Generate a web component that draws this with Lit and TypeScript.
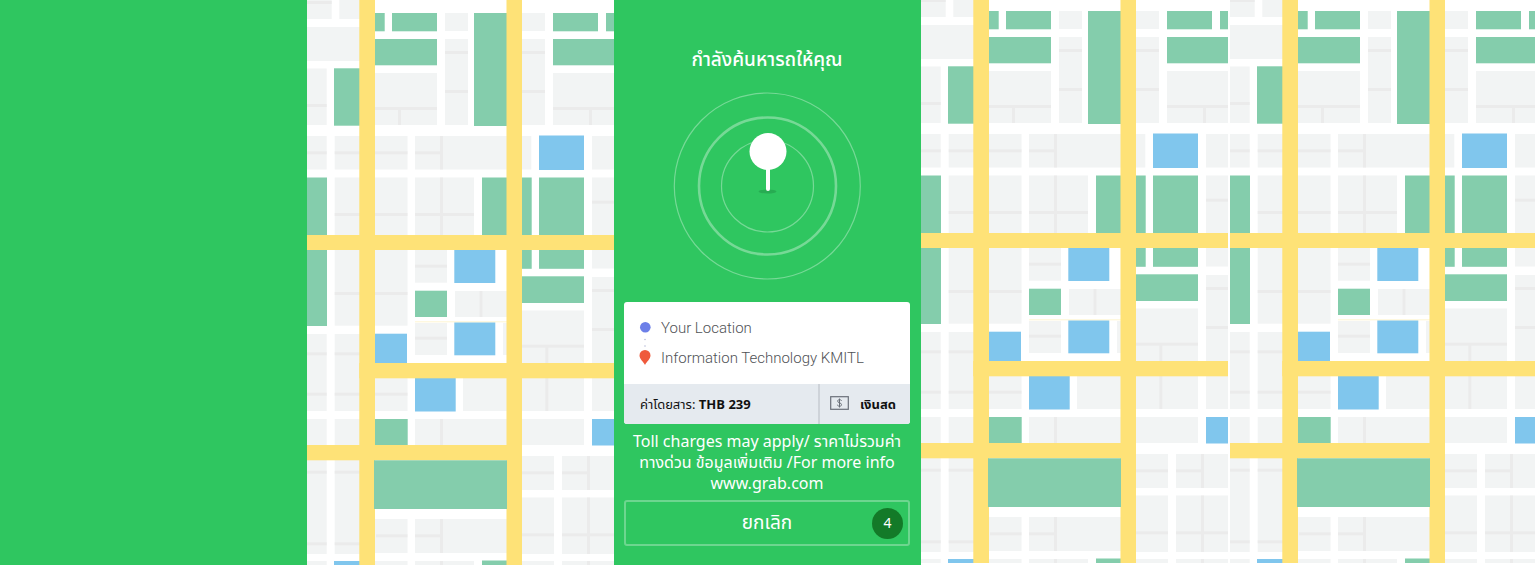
import { LitElement, html, svg, css } from "lit";
import { customElement, property } from "lit/decorators.js";

type Box = [number, number, number, number];

// Every box is left, top, right, bottom.
const blocks: Box[] = [
  [0, 0, 24.7, 19], [32.3, 0, 53, 19], [0, 27, 53, 61], [0, 68.5, 19.7, 125],
  [0, 136, 19.7, 169.5], [27.7, 136, 53, 169.5],
  [138, 13, 161, 31], [138, 39, 161, 125], [68, 73, 130, 125],
  [68, 136, 100.5, 169.5], [108, 136, 200, 169.5],
  [215, 13, 238, 31], [215, 39, 238, 125], [246, 73, 307, 125],
  [215, 136, 224.3, 169.5], [285, 136, 307, 169.5],
  [27.7, 177.5, 53, 325.7], [68, 177.5, 100.5, 325.7], [108, 177.5, 167, 236],
  [285, 177.5, 307, 268.5], [108, 250, 140, 282.7], [148, 291, 200, 317],
  [108, 323, 140, 355], [196, 323, 200, 355], [215, 310.5, 277, 364],
  [285, 277, 307, 364], [0, 334, 19.7, 411], [27.7, 334, 53, 411],
  [68, 378, 100.5, 411], [156, 378, 200, 411], [215, 378, 277, 411],
  [285, 378, 307, 411], [0, 419, 19.7, 446], [27.7, 419, 53, 446],
  [108, 419, 200, 446], [215, 419, 277, 445], [0, 460, 19.7, 554],
  [27.7, 460, 53, 554], [68, 519, 100.5, 553], [108, 519, 200, 553],
  [215, 456, 247, 490], [255, 456, 307, 490], [215, 497.5, 247, 554],
  [255, 497.5, 307, 554], [0, 561, 19.7, 580], [68, 561, 100.5, 580],
  [108, 561, 167, 580], [215, 561, 247, 580], [255, 561, 307, 580],
];

const lanes: Box[] = [
  [0, 1, 24.7, 4], [0, 104, 19.7, 107], [0, 151.3, 19.7, 154.3],
  [27.7, 151.3, 53, 154.3], [138, 51, 161, 54], [138, 90, 161, 93],
  [68, 107, 130, 110], [91, 109, 94, 125], [68, 151.3, 100.5, 154.3],
  [108, 151.3, 134, 154.3], [133, 136, 136, 169.5], [215, 51, 238, 54],
  [215, 90, 238, 93], [246, 107, 307, 110], [282, 109, 285, 125],
  [27.7, 213, 53, 216], [68, 213, 100.5, 216], [108, 213, 167, 216],
  [133, 177.5, 136, 236], [27.7, 292, 53, 295], [68, 292, 100.5, 295],
  [285, 200.7, 307, 203.7], [108, 264.7, 140, 267.7], [172.5, 291, 175.5, 317],
  [108, 336.7, 140, 339.7], [215, 344.7, 277, 347.7], [238.3, 346, 241.3, 411],
  [285, 289, 307, 292], [285, 328, 307, 331], [0, 352.3, 19.7, 355.3],
  [27.7, 352.3, 53, 355.3], [0, 392.7, 19.7, 395.7], [27.7, 392.7, 53, 395.7],
  [68, 392.7, 100.5, 395.7], [133, 419, 136, 446], [0, 470.7, 19.7, 473.7],
  [27.7, 470.7, 53, 473.7], [0, 542.3, 19.7, 545.3], [27.7, 542.3, 53, 545.3],
  [69, 534.3, 100.5, 537.3], [108, 534.3, 134, 537.3], [133, 519, 136, 553],
  [215, 471.3, 247, 474.3], [255, 471.3, 281, 474.3], [280, 456, 283, 490],
  [215, 533.3, 247, 536.3], [255, 533.3, 307, 536.3], [280, 497.5, 283, 554],
  [133, 561, 136, 580], [280, 561, 283, 580],
];

const parks: Box[] = [
  [27, 68.3, 53, 125.7], [68, 13, 77.7, 31.3], [85, 13, 130, 31.3],
  [167, 13, 200, 126], [68, 39, 130, 65.3], [246, 13, 291, 31.3],
  [299, 13, 307, 31.3], [246, 39, 307, 65.3], [0, 177.5, 20, 326],
  [175, 177.5, 200, 236], [215, 177.5, 224.7, 268.8], [232, 177.5, 277, 268.8],
  [108, 290.7, 140, 317], [215, 276.3, 277, 303], [68, 419, 100.7, 446],
  [175, 560.5, 200, 580],
];

const water: Box[] = [
  [232, 135.5, 277, 170], [147.3, 249, 188.3, 283], [147.3, 322.3, 188.3, 355.3],
  [68, 333.7, 100, 364], [108, 378, 148.7, 411.5], [285, 419, 307, 445.5],
  [27, 561, 53, 580],
];

const roads: Box[] = [
  [52.3, 0, 68, 580], [199.5, 0, 215, 580], [0, 235, 307, 250],
  [52.3, 363, 307, 378.3], [0, 445, 215, 460.3],
];

const draw = (boxes: Box[], name: string) =>
  boxes.map(([l, t, r, b]) => svg`<rect class=${name} x=${l} y=${t} width=${r - l} height=${b - t}></rect>`);

@customElement("city-map")
export class CityMap extends LitElement {
  @property({ type: Number }) top = 0;

  static styles = css`
    :host { display: block; position: relative; overflow: hidden; background: #fff; }
    svg { position: absolute; inset: 0; width: 100%; height: 100%; }
    .block { fill: #f2f4f4; }
    .lane { fill: #ebebeb; }
    .park { fill: #84cdac; }
    .water { fill: #80c6ed; }
    .road { fill: #fee277; }
    .trace { fill: #fef5d2; }
  `;

  render() {
    return html`
      <svg viewBox="0 ${this.top} 310 ${565 - this.top}" preserveAspectRatio="xMinYMin slice" aria-hidden="true">
        ${draw(blocks, "block")} ${draw(lanes, "lane")} ${draw(parks, "park")} ${draw(water, "water")}
        <rect class="trace" x="108" y="321.3" width="92" height="1"></rect>
        ${draw(roads, "road")}
        <rect class="park" x="67" y="460.3" width="133" height="48.7"></rect>
      </svg>
    `;
  }
}

@customElement("search-screen")
export class SearchScreen extends LitElement {
  static styles = css`
    :host {
      display: flex;
      flex-direction: column;
      box-sizing: border-box;
      padding: 46px 11px 19px 10px;
      background: #2fc660;
      color: #fff;
    }
    h1 { margin: 0; font-size: 19px; line-height: 30px; font-weight: 500; text-align: center; }
    .radar { display: block; width: 188px; height: 188px; margin: 16px auto 22px; }
    .ring { fill: none; stroke: #fff; stroke-opacity: 0.34; }
    .card { border-radius: 3px; overflow: hidden; background: #fff; color: #505256; }
    .places { list-style: none; margin: 0; padding: 11px 15px; font-family: Roboto, "Noto Sans", sans-serif; }
    .place { display: flex; align-items: center; gap: 10px; height: 30px; font-size: 15px; font-weight: 300; }
    .place svg { flex: none; width: 12px; height: 30px; }
    .fare { display: grid; grid-template-columns: 2fr 92px; height: 40px; background: #e5eaef; color: #111; font-size: 13px; line-height: 42px; }
    .price { padding-left: 16px; }
    .method { display: flex; align-items: center; justify-content: space-between; padding: 0 14px 0 10px; border-left: 2px solid #ced3d9; }
    .method svg { width: 19px; height: 14px; margin-bottom: 4px; }
    .note { margin: 8px 0 5px; font-size: 16px; line-height: 21px; text-align: center; }
    .cancel {
      display: grid;
      grid-template-columns: 1fr auto 1fr;
      align-items: center;
      height: 46px;
      padding: 0 5px;
      border: 2px solid #6dd68f;
      border-radius: 3px;
      background: none;
      color: #fff;
      font: inherit;
      font-size: 19px;
    }
    .label { grid-column: 2; }
    .count { justify-self: end; width: 31px; height: 31px; border-radius: 50%; background: #137a28; font-size: 14px; line-height: 31px; }
  `;

  render() {
    return html`
      <h1>กำลังค้นหารถให้คุณ</h1>
      <svg class="radar" viewBox="0 0 188 188" aria-hidden="true">
        <circle class="ring" cx="94.3" cy="94" r="93" stroke-width="1.2"></circle>
        <circle class="ring" cx="94.500" cy="94" r="68.5" stroke-width="2.6"></circle>
        <circle class="ring" cx="94.500" cy="94" r="46" stroke-width="1.2"></circle>
        <ellipse cx="94.500" cy="99.5" rx="9" ry="2" fill="#27ac52"></ellipse>
        <path d="M95 58V97" stroke="#fff" stroke-width="4" stroke-linecap="round"></path>
        <circle cx="95" cy="59.5" r="18.5" fill="#fff"></circle>
      </svg>
      <section class="card">
        <ul class="places">
          <li class="place">
            <svg viewBox="0 0 12 30" aria-hidden="true">
              <circle cx="6.3" cy="14.3" r="5.3" fill="#6c7fe8"></circle>
              <circle cx="6" cy="26.5" r=".8" fill="#b9bdd8"></circle>
            </svg>
            <span>Your Location</span>
          </li>
          <li class="place">
            <svg viewBox="0 0 12 30" aria-hidden="true">
              <circle cx="6" cy="3" r=".8" fill="#b9bdd8"></circle>
              <path d="M6 22C4.600 19 .5 16 .5 12.500A5.500 5.500 0 0 1 11.500 12.500C11.500 16 7.400 19 6 22Z" fill="#ef5a3c"></path>
            </svg>
            <span>Information Technology KMITL</span>
          </li>
        </ul>
        <div class="fare">
          <span class="price">ค่าโดยสาร: <b>THB 239</b></span>
          <span class="method">
            <svg viewBox="0 0 19 14" fill="none" stroke="#6a7079" aria-hidden="true">
              <rect x=".7" y=".7" width="17.600" height="12.600" stroke-width="1.200"></rect>
              <path d="M11.500 5C11.300 4 10.500 3.600 9.500 3.600S7.700 4.100 7.700 5.200C7.700 7.400 11.500 6.300 11.500 8.700C11.500 9.800 10.600 10.300 9.500 10.300S7.600 9.800 7.500 8.700M9.500 2.500V11.500"></path>
            </svg>
            <b>เงินสด</b>
          </span>
        </div>
      </section>
      <p class="note">Toll charges may apply/ ราคาไม่รวมค่าทางด่วน ข้อมูลเพิ่มเติม /For more info www.grab.com</p>
      <button class="cancel" type="button"><span class="label">ยกเลิก</span><span class="count">4</span></button>
    `;
  }
}

@customElement("app-root")
export class AppRoot extends LitElement {
  static styles = css`
    :host {
      display: grid;
      grid-template-columns: repeat(5, minmax(0, 1fr));
      min-height: 100vh;
      background: #fff;
      font-family: "Noto Sans Thai", "Noto Sans", sans-serif;
    }
    .plain { background: #2fc660; }
    .raised { margin-bottom: 2px; }
    .last { margin-left: 2px; }
  `;

  render() {
    return html`
      <div class="plain"></div>
      <city-map></city-map>
      <search-screen></search-screen>
      <city-map class="raised" .top=${2}></city-map>
      <city-map class="raised last" .top=${2}></city-map>
    `;
  }
}
